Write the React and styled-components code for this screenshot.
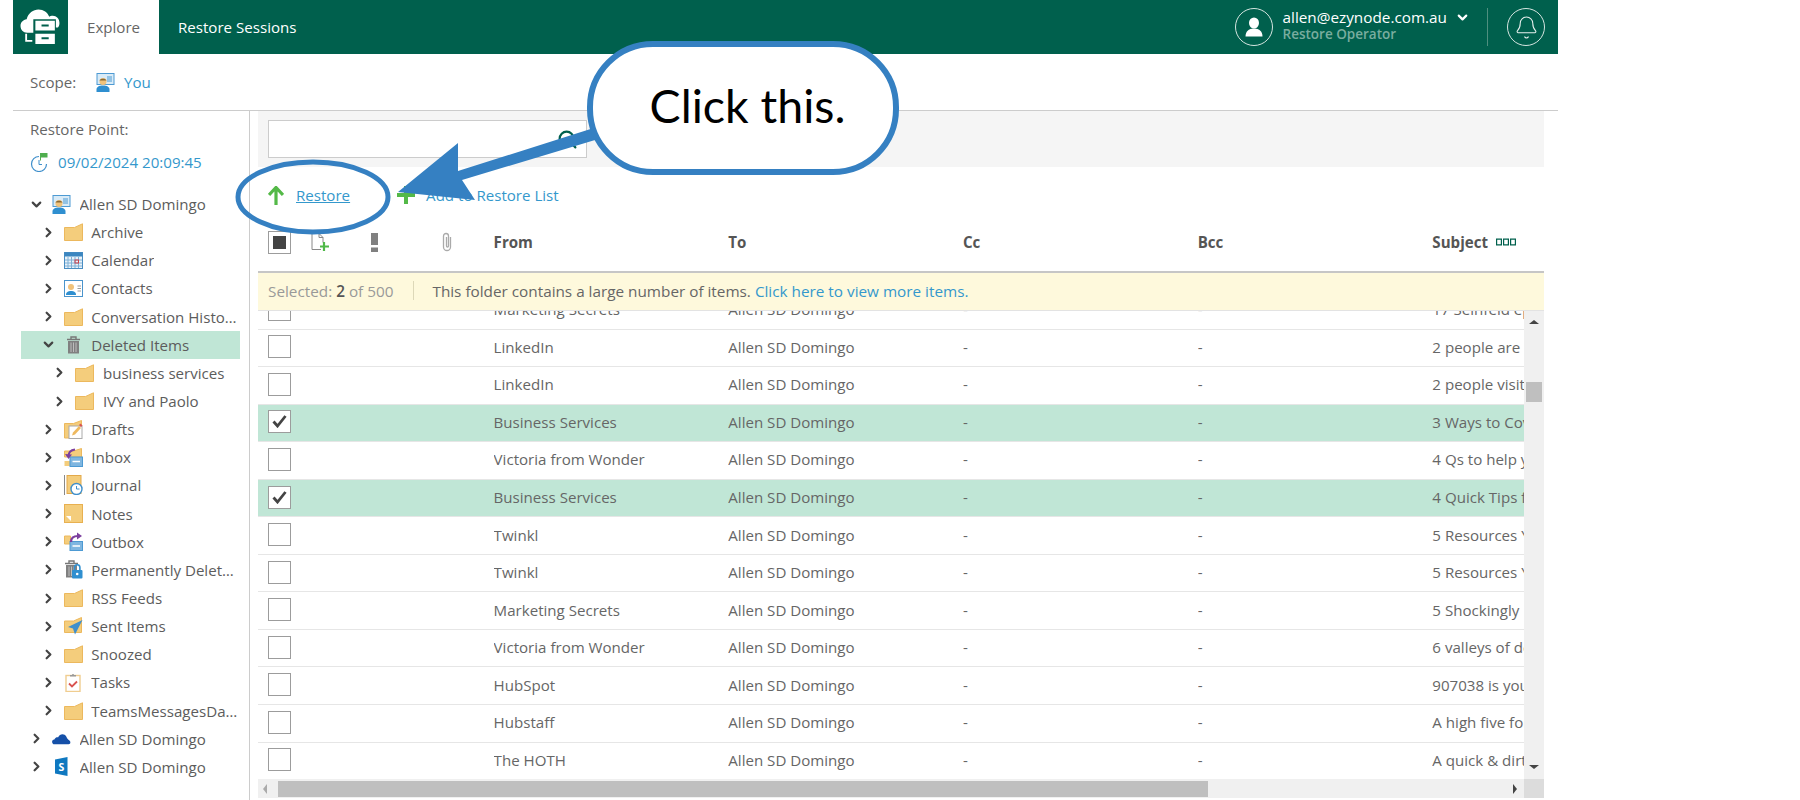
import React from 'react';
import styled, { createGlobalStyle } from 'styled-components';
import { Search, Bell, ChevronDown, ChevronRight } from 'lucide-react';

const GlobalStyle = createGlobalStyle`
  html, body {
    margin: 0;
    background: #fff;
    font-family: 'Open Sans', sans-serif;
    font-size: 15.1px;
    color: #555;
  }
  * { box-sizing: border-box; }
`;

const Page = styled.div`
  position: relative;
  width: 1545px;
  height: 800px;
  margin-left: 13px;
  overflow: visible;
`;

const TopBar = styled.header`
  display: flex;
  align-items: stretch;
  height: 54px;
  background: #00604d;
  color: #fff;
`;

const LogoTile = styled.div`
  display: flex;
  align-items: center;
  justify-content: center;
  width: 55px;
`;

const Tab = styled.div`
  display: flex;
  align-items: center;
  padding: 0 19px;
  background: ${(p) => (p.$active ? '#fff' : 'transparent')};
  color: ${(p) => (p.$active ? '#666' : '#fff')};
`;

const ActiveTab = styled(Tab)`
  width: 91px;
`;

const UserArea = styled.div`
  display: flex;
  align-items: center;
  margin-left: auto;
`;

const RoundBadge = styled.div`
  display: flex;
  align-items: center;
  justify-content: center;
  width: 38px;
  height: 38px;
  border: 1.5px solid #d5e5e0;
  border-radius: 50%;
`;

const UserText = styled.div`
  display: flex;
  flex-direction: column;
  margin: 0 0 2px 10px;
  line-height: 17px;
`;

const UserMail = styled.div`
  display: flex;
  align-items: center;
  gap: 8px;
  font-size: 15.3px;
`;

const UserRole = styled.div`
  color: #79ad9f;
  font-size: 13.5px;
  font-weight: 600;
`;

const TopDivider = styled.div`
  width: 1px;
  height: 38px;
  margin: 0 19px 0 17px;
  background: #4f8f7f;
`;

const BellSlot = styled.div`
  margin-right: 13px;
`;

const ScopeRow = styled.div`
  display: flex;
  align-items: center;
  height: 57px;
  padding-left: 17px;
  border-bottom: 1px solid #ccc;
`;

const ScopeLabel = styled.span`
  width: 66px;
  color: #666;
`;

const LinkText = styled.a`
  color: ${(p) => p.$color || '#3498cc'};
  text-decoration: ${(p) => (p.$under ? 'underline' : 'none')};
`;

const ScopeLink = styled(LinkText)`
  margin-left: 9px;
`;

const Body = styled.div`
  display: flex;
  height: 690px;
`;

const Sidebar = styled.aside`
  width: 237px;
  padding-top: 6px;
  border-right: 1px solid #ccc;
`;

const SideLabel = styled.div`
  height: 24px;
  padding-left: 17px;
  line-height: 24px;
  color: #666;
`;

const RestoreDate = styled.div`
  display: flex;
  align-items: center;
  gap: 10px;
  height: 36px;
  margin-top: 3px;
  padding-left: 17px;
`;

const Tree = styled.div`
  margin: 10px 0 0 8px;
  width: 219px;
`;

const TreeRow = styled.div`
  display: flex;
  align-items: center;
  height: 28.15px;
  padding: 0 2px 0 ${(p) => 8 + p.$level * 11.7}px;
  background: ${(p) => (p.$selected ? '#c0e6d6' : 'transparent')};
  color: #5c5c5c;
`;

const TreeIcon = styled.span`
  display: flex;
  align-items: center;
  justify-content: center;
  width: 19px;
  height: 20px;
  margin-left: 8px;
  flex: none;
`;

const TreeLabel = styled.span`
  min-width: 0;
  margin-left: 8.5px;
  overflow: hidden;
  white-space: nowrap;
  text-overflow: ellipsis;
`;

const Main = styled.main`
  display: flex;
  flex-direction: column;
  width: 1286px;
  margin-left: 8px;
`;

const SearchPanel = styled.div`
  display: flex;
  align-items: center;
  flex: none;
  height: 56px;
  padding-left: 10px;
  background: #f5f5f5;
`;

const SearchBox = styled.div`
  display: flex;
  align-items: center;
  justify-content: flex-end;
  width: 319px;
  height: 38px;
  padding-right: 8px;
  border: 1px solid #ccc;
  background: #fff;
`;

const Toolbar = styled.div`
  display: flex;
  align-items: center;
  flex: none;
  height: 56px;
  padding-left: 10px;
`;

const ToolAction = styled.div`
  display: flex;
  align-items: center;
  gap: ${(p) => p.$gap}px;
  margin-right: ${(p) => p.$after || 0}px;
`;

const columns = '235.6px repeat(4, 234.7px) 1fr';

const HeadRow = styled.div`
  display: grid;
  flex: none;
  grid-template-columns: ${columns};
  height: 50px;
  padding-bottom: 10px;
  border-bottom: 2px solid #c6c6c6;
  color: #555;
  font-weight: 700;
  align-items: center;
`;

const HeadIcons = styled.div`
  display: flex;
  align-items: center;
  padding-left: 10px;
`;

const HeadGlyph = styled.span`
  display: flex;
  justify-content: center;
  flex: none;
  width: ${(p) => p.$w}px;
`;

const SubjectHead = styled.div`
  display: flex;
  align-items: center;
  gap: 8px;
`;

const Notice = styled.div`
  display: flex;
  align-items: center;
  flex: none;
  height: 38px;
  padding: 0 0 2px 10px;
  background: #fef9dc;
  border-bottom: 1px solid #e3e3e3;
  color: #666;
  font-size: 15.3px;
`;

const SelectedCount = styled.span`
  color: #999;
  b { color: #555; font-weight: 600; }
`;

const NoticeDivider = styled.span`
  width: 1px;
  height: 19px;
  margin: 0 18px 0 20px;
  background: #ddd8b8;
`;

const GridArea = styled.div`
  display: flex;
  flex: none;
  height: 468px;
`;

const RowList = styled.div`
  width: 1266px;
  overflow: hidden;
`;

const Rows = styled.div`
  margin-top: -19px;
`;

const Row = styled.div`
  display: grid;
  grid-template-columns: ${columns};
  align-items: center;
  height: 37.55px;
  padding-bottom: 2px;
  border-bottom: 1px solid #e6e6e6;
  background: ${(p) => (p.$selected ? '#c0e6d6' : '#fff')};
  color: #666;
`;

const CheckCell = styled.div`
  padding-left: 10px;
`;

const Box = styled.div`
  display: flex;
  align-items: center;
  justify-content: center;
  flex: none;
  width: 23px;
  height: 23px;
  border: 1px solid #9c9c9c;
  background: #fff;
`;

const BoxFill = styled.div`
  width: 13px;
  height: 13px;
  background: #444;
`;

const Clip = styled.div`
  min-width: 0;
  overflow: hidden;
  white-space: nowrap;
`;

const VBar = styled.div`
  display: flex;
  flex-direction: column;
  align-items: center;
  width: 20px;
  padding-top: 9px;
  background: #f0f0f0;
`;

const VThumb = styled.div`
  width: 16px;
  height: 20px;
  margin-top: 58px;
  background: #bfbfbf;
`;

const ArrowGlyph = styled.div`
  width: 0;
  height: 0;
  border-left: 5px solid transparent;
  border-right: 5px solid transparent;
  ${(p) => (p.$down ? 'border-top: 4px solid #444;' : 'border-bottom: 4px solid #444;')}
`;

const DownArrow = styled(ArrowGlyph)`
  margin-top: auto;
  margin-bottom: 10px;
`;

const HBar = styled.div`
  display: flex;
  align-items: center;
  flex: none;
  height: 19px;
  background: #f0f0f0;
`;

const HArrow = styled.div`
  width: 0;
  height: 0;
  border-top: 5px solid transparent;
  border-bottom: 5px solid transparent;
  ${(p) => (p.$left ? 'border-right: 4px solid #aaa; margin: 0 11px 0 5px;' : 'border-left: 4px solid #444; margin-left: 305px;')}
`;

const HThumb = styled.div`
  width: 930px;
  height: 16px;
  background: #bfbfbf;
`;

const HCorner = styled.div`
  width: 20px;
  height: 100%;
  margin-left: auto;
  background: #dcdcdc;
`;

const AnnotationLayer = styled.svg`
  position: absolute;
  left: -13px;
  top: 0;
  width: 1000px;
  height: 300px;
  pointer-events: none;
`;

const Callout = styled.div`
  position: absolute;
  left: 574px;
  top: 41px;
  display: flex;
  align-items: center;
  justify-content: center;
  width: 312px;
  height: 134px;
  padding: 0 0 6px 9px;
  border: 6px solid #3580c2;
  border-radius: 66px;
  background: #fff;
  color: #000;
  font-family: Lato, sans-serif;
  font-size: 46.5px;
`;

/* icons */
const LogoIcon = () => (
  <svg width="41" height="41" viewBox="0 0 40 40">
    <path d="M7 25c-4 0-6.500-3-6.500-6.500S3 12.500 6.500 12C8 6 13 2.500 18 2.500c5 0 9 3 10.500 7 1-.7 2-1 3.500-1 3.500 0 6.500 3 6.500 7 0 2-.6 3.500-1.500 4.500h-2V12H13v13H7z" fill="#fff" />
    <path d="M15 13.500h19V23H15zM15 26h19v10H15z" fill="#fff" />
    <path d="M21 17h7v2h-7zM21 29.500h7v2h-7z" fill="#00604d" />
    <path d="M6 26v7h6" stroke="#fff" strokeWidth="1.800" fill="none" />
  </svg>
);

const PersonCardIcon = () => (
  <svg width="19" height="19" viewBox="0 0 19 19">
    <rect x="1" y="0.500" width="17" height="11" fill="#d9ebf7" stroke="#4d9ad3" />
    <path d="M11 4h5M11 6h5M11 8h5" stroke="#4d9ad3" />
    <path d="M0.500 19v-2.500C0.500 14 3 12.500 7 12.500s6.500 1.500 6.500 4V19z" fill="#2f8fd0" />
    <circle cx="7" cy="8.500" r="3.500" fill="#f0c27b" />
    <path d="M3.500 7.500C4 5 10 5 10.500 7.500z" fill="#8a6a35" />
  </svg>
);

const FolderIcon = () => (
  <svg width="19" height="18" viewBox="0 0 19 18">
    <path d="M0.500 4.500h10L18.500 0.800V17.500H0.500z" fill="#f4cd7c" stroke="#ecb85d" />
  </svg>
);

const CalendarIcon = () => (
  <svg width="19" height="17" viewBox="0 0 19 17">
    <rect x="0.500" y="0.500" width="18" height="16" fill="#e9f2f9" stroke="#4a8dc2" />
    <rect x="0.500" y="0.500" width="18" height="4" fill="#3b86c0" />
    <path d="M4 5v11M7.500 5v11M11 5v11M14.500 5v11M1 8h17M1 11h17M1 14h17" stroke="#7fb0d6" />
    <rect x="11" y="8" width="3.500" height="3" fill="none" stroke="#d0414a" />
  </svg>
);

const ContactsIcon = () => (
  <svg width="19" height="17" viewBox="0 0 19 17">
    <rect x="0.500" y="0.500" width="18" height="16" fill="#fff" stroke="#4a94cc" />
    <path d="M2 15c0-3 2-4 5-4s5 1 5 4z" fill="#2f8fd0" />
    <circle cx="7" cy="7" r="3" fill="#f0c27b" />
    <path d="M13.500 6h3.500M13.500 8.500h3.500M13.500 11h3.500" stroke="#999" />
  </svg>
);

const TrashBody = () => (
  <>
    <path d="M1 3.500h13M5 3V1h5v2" stroke="#777" strokeWidth="1.400" fill="none" />
    <path d="M2 5h11v12.500H2z" fill="#808080" />
    <path d="M5 6.500v9.500M7.500 6.500v9.500M10 6.500v9.500" stroke="#bdbdbd" />
  </>
);

const TrashIcon = () => (
  <svg width="15" height="18" viewBox="0 0 15 18"><TrashBody /></svg>
);

const PermTrashIcon = () => (
  <svg width="19" height="19" viewBox="0 0 19 19">
    <TrashBody />
    <rect x="8" y="10" width="10.500" height="8.500" rx="1" fill="#2f8fd0" />
    <path d="M10.500 10V7.500a2.700 2.700 0 0 1 5.400 0V10" stroke="#2f8fd0" strokeWidth="1.600" fill="none" />
    <circle cx="13.200" cy="14" r="1.300" fill="#fff" />
  </svg>
);

const DraftsIcon = () => (
  <svg width="19" height="19" viewBox="0 0 19 19">
    <path d="M0.500 3.500h9l8-3v6H6v11.500H0.500z" fill="#f4cd7c" stroke="#ecb85d" />
    <rect x="5" y="6" width="13" height="12.500" fill="#fff" stroke="#aaa" />
    <path d="M8 15.500l1-3 6-6.500 2 2-6 6.500z" fill="#eeb95f" />
    <path d="M15 5l1.500-1.500 2 2L17 7z" fill="#d9534f" />
  </svg>
);

const InboxIcon = () => (
  <svg width="19" height="19" viewBox="0 0 19 19">
    <path d="M0.500 3h9l8-2.500V9H0.500z" fill="#f4cd7c" stroke="#ecb85d" />
    <rect x="0.500" y="13" width="6" height="5" fill="#f4cd7c" />
    <rect x="6" y="9" width="12.500" height="9.500" fill="#7fb6e0" stroke="#4d9ad3" />
    <path d="M8.500 13.500h7.500" stroke="#fff" strokeWidth="1.500" />
    <path d="M11 1.500C7 2 4.500 4 4.500 8.500" stroke="#7c3f9e" strokeWidth="2.200" fill="none" />
    <path d="M1 6l3.500 5L8 6.500z" fill="#7c3f9e" />
  </svg>
);

const JournalIcon = () => (
  <svg width="19" height="20" viewBox="0 0 19 20">
    <path d="M0.500 0v20" stroke="#888" />
    <rect x="3" y="0.500" width="14" height="18" fill="#f4cd7c" stroke="#e3a94a" />
    <circle cx="12.500" cy="14" r="5.500" fill="#fff" stroke="#3f8fcb" strokeWidth="1.400" />
    <path d="M12.500 11v3h3" stroke="#3f8fcb" fill="none" />
  </svg>
);

const NotesIcon = () => (
  <svg width="19" height="19" viewBox="0 0 19 19">
    <rect x="0.500" y="0.500" width="18" height="18" fill="#f4cd7c" stroke="#e8b050" />
    <path d="M2 12h5v5z" fill="#fff" />
  </svg>
);

const OutboxIcon = () => (
  <svg width="19" height="19" viewBox="0 0 19 19">
    <path d="M0.500 4h6v8h-6z" fill="#f4cd7c" stroke="#ecb85d" />
    <rect x="6" y="9.500" width="12.500" height="9" fill="#7fb6e0" stroke="#4d9ad3" />
    <path d="M8.500 14h7.500" stroke="#fff" strokeWidth="1.500" />
    <path d="M7 10c0-4 3-6 7-6" stroke="#7c3f9e" strokeWidth="2.200" fill="none" />
    <path d="M13 0.500l5 3.500-5 3.500z" fill="#7c3f9e" />
  </svg>
);

const SentIcon = () => (
  <svg width="19" height="19" viewBox="0 0 19 19">
    <path d="M0.500 4h9l8-3.500V15.500H0.500z" fill="#f4cd7c" stroke="#ecb85d" />
    <path d="M18.500 3L4 10l5 1.500 2 6z" fill="#3f8fcb" />
  </svg>
);

const TasksIcon = () => (
  <svg width="16" height="19" viewBox="0 0 16 19">
    <rect x="1" y="2.500" width="14" height="16" fill="#fff" stroke="#f0cd90" strokeWidth="1.400" />
    <path d="M5 3.500V2h2a1 1 0 0 1 2 0h2v1.500z" fill="#999" />
    <path d="M4 10.500l3 3 5-5" stroke="#d9534f" strokeWidth="1.800" fill="none" />
  </svg>
);

const OneDriveIcon = () => (
  <svg width="20" height="13" viewBox="0 0 20 13">
    <path d="M1.500 12.500C-.5 11-.5 8 2.500 7.500 3.500 5 5.500 5 6.500 5.200 8 1.500 13 .5 15 4.500c1 3 3 3.500 4 5 .8 1.500 0 3-1.500 3z" fill="#1550a8" />
  </svg>
);

const SharePointIcon = () => (
  <svg width="14" height="19" viewBox="0 0 14 19">
    <path d="M0 2.500L12.500 0v19L0 16.500z" fill="#0f78c0" />
    <text x="6.300" y="13.500" fontSize="10.500" fontWeight="700" fill="#fff" textAnchor="middle" fontFamily="Open Sans, sans-serif">S</text>
  </svg>
);

const UserIcon = () => (
  <svg width="18" height="20" viewBox="0 0 18 20">
    <ellipse cx="9" cy="6" rx="5" ry="5.500" fill="#fff" />
    <path d="M0.500 19.500c0-5 3-8 8.500-8s8.500 3 8.500 8z" fill="#fff" />
  </svg>
);

const RestorePointIcon = () => (
  <svg width="18" height="19" viewBox="0 0 18 19">
    <path d="M9 3.500a7.500 7.500 0 1 0 7.500 7.500" stroke="#3f8fcb" strokeWidth="1.200" fill="none" />
    <path d="M9 7v4.500h3" stroke="#3f8fcb" fill="none" />
    <path d="M10 0h7.500v4.500H11v3h-1z" fill="#4fae4e" />
  </svg>
);

const NewItemIcon = () => (
  <svg width="18" height="19" viewBox="0 0 18 19">
    <path d="M1 .5h7l4 4v5M8 .5v4h4M10 16.500H1V.5" stroke="#888" fill="none" />
    <path d="M13 9v9M9 13.500h9" stroke="#4fb848" strokeWidth="2.200" />
  </svg>
);

const ColumnsIcon = () => (
  <svg width="20" height="8" viewBox="0 0 20 8">
    <path d="M.6 1.100h4.800v5.800H.6zM7.600 1.100h4.800v5.800H7.600zM14.600 1.100h4.800v5.800h-4.800z" fill="none" stroke="#00604d" strokeWidth="1.200" />
  </svg>
);

const CheckMark = () => (
  <svg width="15" height="13" viewBox="0 0 15 13">
    <path d="M1.500 6.500l4 4.500 8-10" stroke="#444" strokeWidth="2.800" fill="none" />
  </svg>
);

const UpArrowIcon = () => (
  <svg width="16" height="19" viewBox="0 0 16 19">
    <path d="M8 19V2M1 9l7-7.500L15 9" stroke="#54b948" strokeWidth="3.200" fill="none" />
  </svg>
);

const PlusIcon = () => (
  <svg width="18" height="18" viewBox="0 0 18 18">
    <path d="M9 0v18M0 9h18" stroke="#54b948" strokeWidth="4" />
  </svg>
);

const ClipIcon = () => (
  <svg width="12" height="20" viewBox="0 0 12 20">
    <path d="M9.500 5v10a3.500 3.500 0 0 1-7 0V4a2.500 2.500 0 0 1 5 0v10a1 1 0 0 1-2 0V5" stroke="#aaa" strokeWidth="1.300" fill="none" />
  </svg>
);

const treeItems = [
  { level: 0, label: 'Allen SD Domingo', icon: <PersonCardIcon />, open: true },
  { level: 1, label: 'Archive', icon: <FolderIcon /> },
  { level: 1, label: 'Calendar', icon: <CalendarIcon /> },
  { level: 1, label: 'Contacts', icon: <ContactsIcon /> },
  { level: 1, label: 'Conversation History', icon: <FolderIcon /> },
  { level: 1, label: 'Deleted Items', icon: <TrashIcon />, open: true, selected: true },
  { level: 2, label: 'business services', icon: <FolderIcon /> },
  { level: 2, label: 'IVY and Paolo', icon: <FolderIcon /> },
  { level: 1, label: 'Drafts', icon: <DraftsIcon /> },
  { level: 1, label: 'Inbox', icon: <InboxIcon /> },
  { level: 1, label: 'Journal', icon: <JournalIcon /> },
  { level: 1, label: 'Notes', icon: <NotesIcon /> },
  { level: 1, label: 'Outbox', icon: <OutboxIcon /> },
  { level: 1, label: 'Permanently Deleted Items', icon: <PermTrashIcon /> },
  { level: 1, label: 'RSS Feeds', icon: <FolderIcon /> },
  { level: 1, label: 'Sent Items', icon: <SentIcon /> },
  { level: 1, label: 'Snoozed', icon: <FolderIcon /> },
  { level: 1, label: 'Tasks', icon: <TasksIcon /> },
  { level: 1, label: 'TeamsMessagesData', icon: <FolderIcon /> },
  { level: 0, label: 'Allen SD Domingo', icon: <OneDriveIcon /> },
  { level: 0, label: 'Allen SD Domingo', icon: <SharePointIcon /> },
];

const mails = [
  ['Marketing Secrets', '17 Seinfeld episodes'],
  ['LinkedIn', '2 people are'],
  ['LinkedIn', '2 people visited'],
  ['Business Services', '3 Ways to Cover', true],
  ['Victoria from Wonder', '4 Qs to help you'],
  ['Business Services', '4 Quick Tips for', true],
  ['Twinkl', '5 Resources You'],
  ['Twinkl', '5 Resources You'],
  ['Marketing Secrets', '5 Shockingly'],
  ['Victoria from Wonder', '6 valleys of death'],
  ['HubSpot', '907038 is your code'],
  ['Hubstaff', 'A high five for'],
  ['The HOTH', 'A quick & dirty'],
];

export default function App() {
  return (
    <Page>
      <GlobalStyle />
      <TopBar>
        <LogoTile><LogoIcon /></LogoTile>
        <ActiveTab $active>Explore</ActiveTab>
        <Tab>Restore Sessions</Tab>
        <UserArea>
          <RoundBadge><UserIcon /></RoundBadge>
          <UserText>
            <UserMail>allen@ezynode.com.au <ChevronDown size={15} strokeWidth={3.500} /></UserMail>
            <UserRole>Restore Operator</UserRole>
          </UserText>
          <TopDivider />
          <BellSlot>
            <RoundBadge><Bell size={25} strokeWidth={1} color="#e8f0ee" /></RoundBadge>
          </BellSlot>
        </UserArea>
      </TopBar>
      <ScopeRow>
        <ScopeLabel>Scope:</ScopeLabel>
        <PersonCardIcon />
        <ScopeLink>You</ScopeLink>
      </ScopeRow>
      <Body>
        <Sidebar>
          <SideLabel>Restore Point:</SideLabel>
          <RestoreDate>
            <RestorePointIcon />
            <LinkText>09/02/2024 20:09:45</LinkText>
          </RestoreDate>
          <Tree>
            {treeItems.map((item, i) => (
              <TreeRow key={i} $level={item.level} $selected={item.selected}>
                {item.open
                  ? <ChevronDown size={15} strokeWidth={3.500} color="#444" style={{ flex: 'none' }} />
                  : <ChevronRight size={15} strokeWidth={3.500} color="#444" style={{ flex: 'none' }} />}
                <TreeIcon>{item.icon}</TreeIcon>
                <TreeLabel>{item.label}</TreeLabel>
              </TreeRow>
            ))}
          </Tree>
        </Sidebar>
        <Main>
          <SearchPanel>
            <SearchBox><Search size={21} color="#00604d" strokeWidth={2.500} /></SearchBox>
          </SearchPanel>
          <Toolbar>
            <ToolAction $gap={12} $after={47}>
              <UpArrowIcon />
              <LinkText $under>Restore</LinkText>
            </ToolAction>
            <ToolAction $gap={11}>
              <PlusIcon />
              <LinkText>Add to Restore List</LinkText>
            </ToolAction>
          </Toolbar>
          <HeadRow>
            <HeadIcons>
              <Box><BoxFill /></Box>
              <HeadGlyph $w={58}><NewItemIcon /></HeadGlyph>
              <HeadGlyph $w={50}>
                <svg width="7" height="19" viewBox="0 0 7 19"><path d="M0 0h7v12H0zM0 14.500h7V19H0z" fill="#808080" /></svg>
              </HeadGlyph>
              <HeadGlyph $w={95}><ClipIcon /></HeadGlyph>
            </HeadIcons>
            <div>From</div>
            <div>To</div>
            <div>Cc</div>
            <div>Bcc</div>
            <SubjectHead>Subject <ColumnsIcon /></SubjectHead>
          </HeadRow>
          <Notice>
            <SelectedCount>Selected: <b>2</b> of 500</SelectedCount>
            <NoticeDivider />
            <span>This folder contains a large number of items.&nbsp;</span>
            <LinkText>Click here to view more items.</LinkText>
          </Notice>
          <GridArea>
            <RowList>
              <Rows>
                {mails.map(([from, subject, selected], i) => (
                  <Row key={i} $selected={selected}>
                    <CheckCell><Box>{selected && <CheckMark />}</Box></CheckCell>
                    <Clip>{from}</Clip>
                    <Clip>Allen SD Domingo</Clip>
                    <Clip>-</Clip>
                    <Clip>-</Clip>
                    <Clip>{subject}</Clip>
                  </Row>
                ))}
              </Rows>
            </RowList>
            <VBar>
              <ArrowGlyph />
              <VThumb />
              <DownArrow $down />
            </VBar>
          </GridArea>
          <HBar>
            <HArrow $left />
            <HThumb />
            <HArrow />
            <HCorner />
          </HBar>
        </Main>
      </Body>
      <AnnotationLayer viewBox="0 0 1000 300">
        <ellipse cx="313" cy="197" rx="75" ry="35" fill="none" stroke="#3580c2" strokeWidth="5" />
        <polygon points="398,192 458,143 458,171 600,126 605,137 462,180 475,200" fill="#3580c2" />
      </AnnotationLayer>
      <Callout>Click this.</Callout>
    </Page>
  );
}
